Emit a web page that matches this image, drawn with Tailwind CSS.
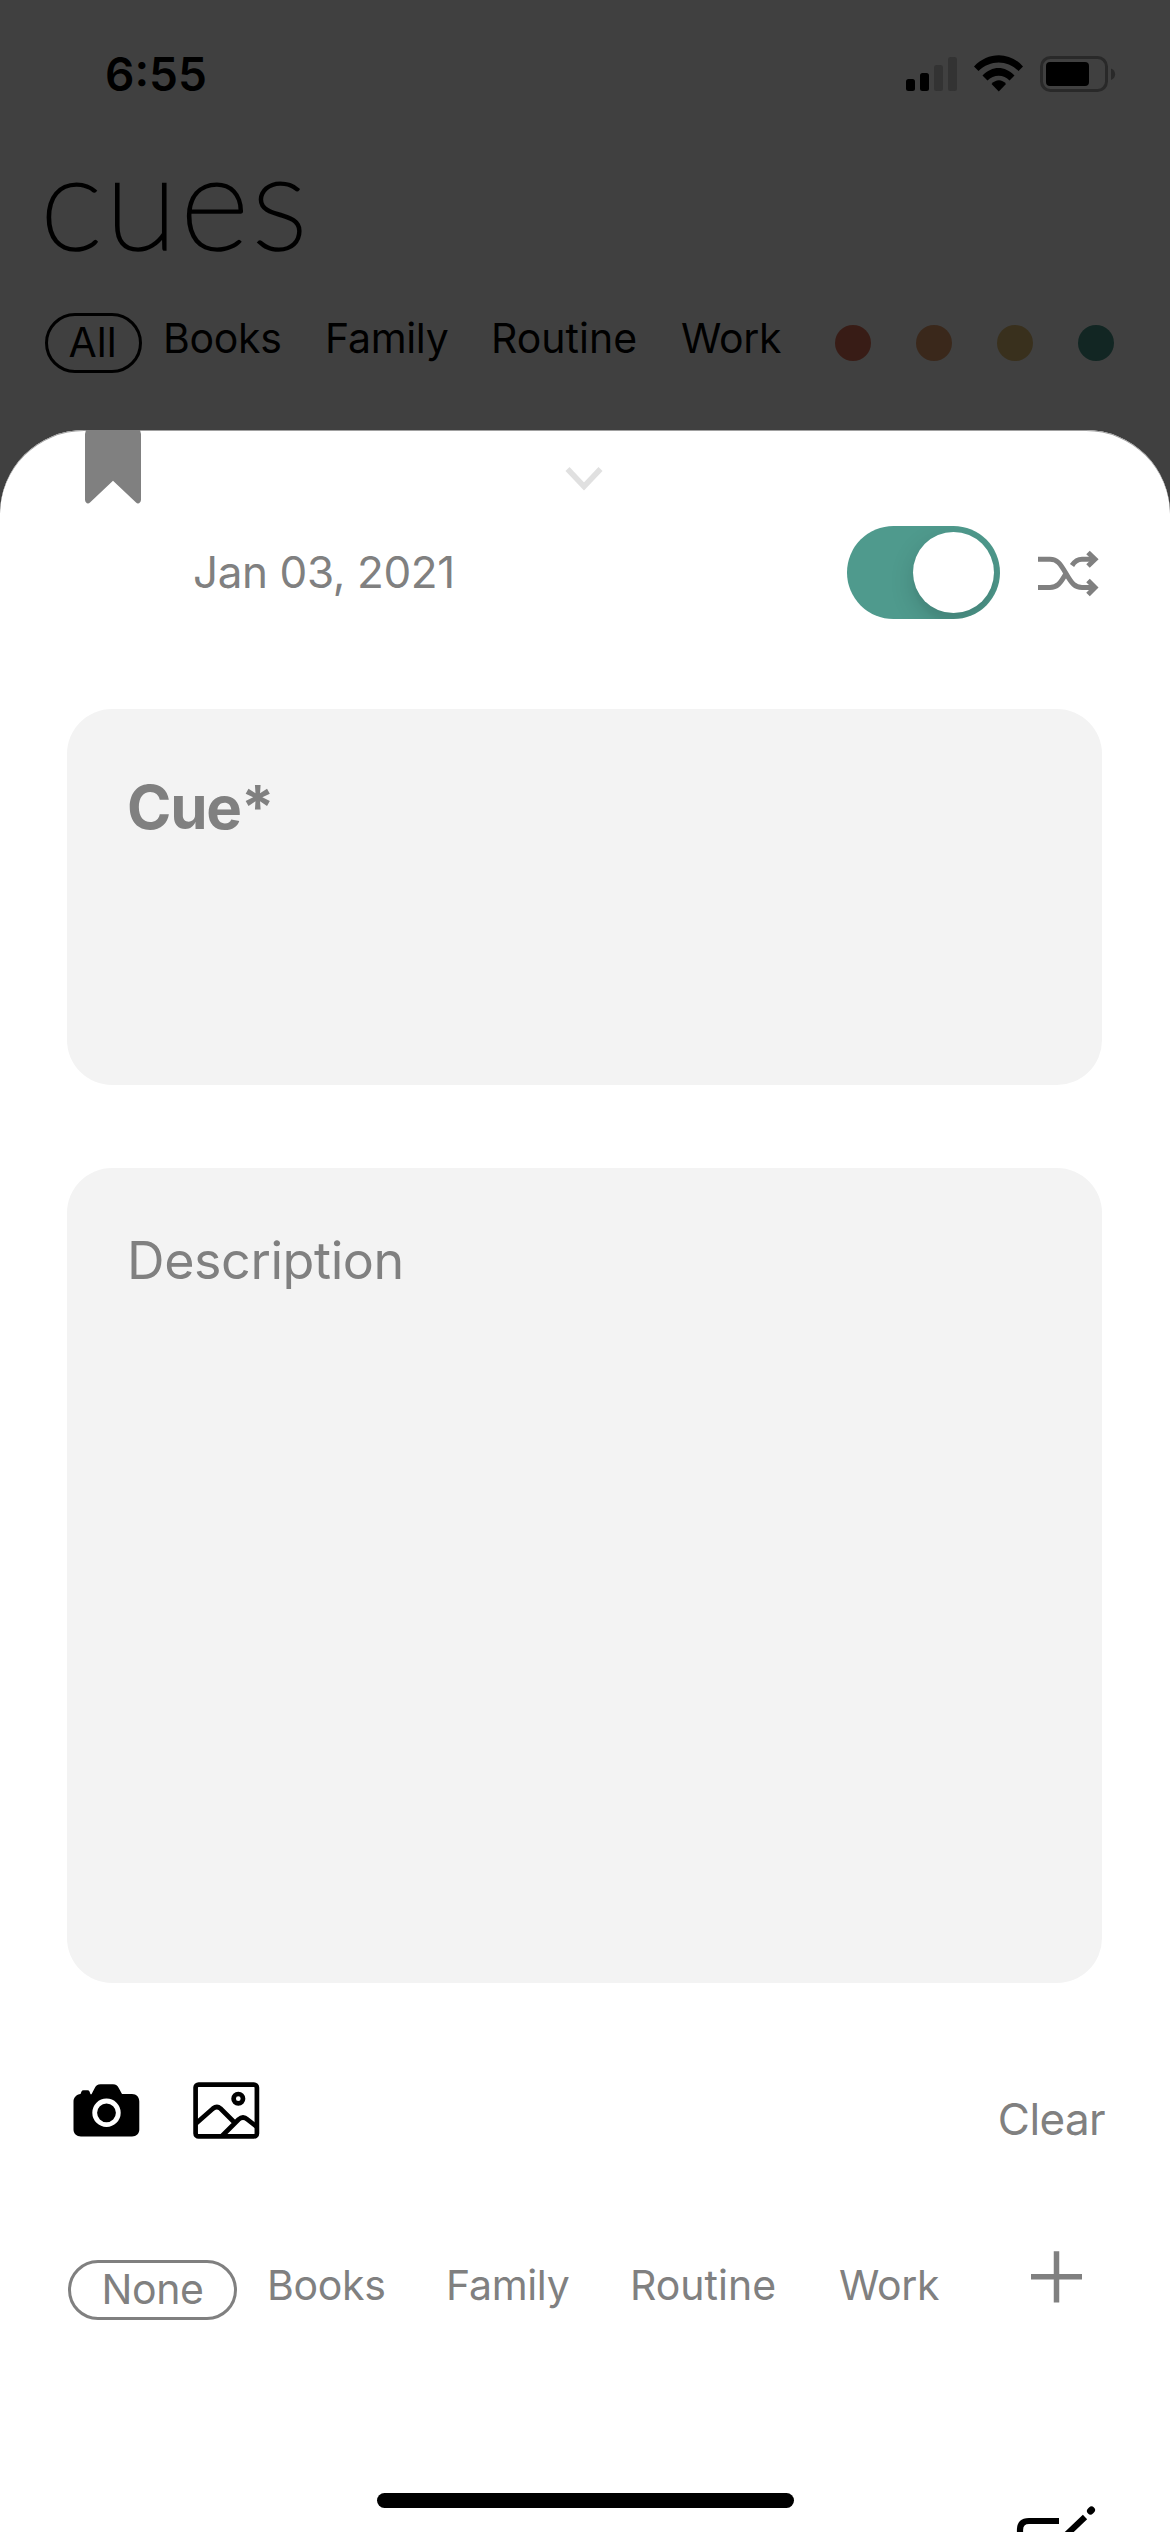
<!DOCTYPE html>
<html lang="en">
<head>
<meta charset="utf-8">
<title>Cues</title>
<script src="https://cdn.jsdelivr.net/npm/@tailwindcss/browser@4"></script>
</head>
<body class="bg-[#404040]">
<div class="relative flex h-[2532px] w-[1170px] flex-col overflow-hidden bg-[#404040] font-['Inter',sans-serif] whitespace-nowrap text-black">
  <!-- Status bar -->
  <header class="flex h-[150px] shrink-0 items-start justify-between pr-[54px] pl-[105px] pt-[44px]">
    <span class="text-[46px] leading-[61px] font-semibold">6:55</span>
    <div class="flex items-start gap-[16px] pt-[9px]">
      <svg class="h-[40px] w-[52px]" viewBox="0 0 52 40">
        <rect x="0" y="26" width="9" height="12" rx="2.5"/>
        <rect x="14" y="20" width="9" height="18" rx="2.5"/>
        <rect x="28" y="12" width="9" height="26" rx="2.5" fill="#333"/>
        <rect x="42" y="4" width="9" height="34" rx="2.5" fill="#333"/>
      </svg>
      <svg class="h-[40px] w-[50px]" viewBox="0 0 50 40">
        <path d="M0 13.500C14-1.500 36-1.500 49 13.500L44.500 18C33.500 6.500 16 6.500 4.500 18Z"/>
        <path d="M8.500 22.500C18 12.500 31 12.500 40.500 22.500L35.500 27.500C30 21 19.500 21 13.500 27.500Z"/>
        <path d="M17.500 31C22 26 28 26 32 31L24.800 38.500Z"/>
      </svg>
      <svg class="h-[40px] w-[76px]" viewBox="0 0 76 40">
        <rect x="1.500" y="4.500" width="65" height="33" rx="9" fill="none" stroke="#292929" stroke-width="3"/>
        <rect x="6" y="9" width="43" height="24" rx="4"/>
        <path d="M71 15.500c5.500 2 5.500 9.500 0 11.500Z" fill="#292929"/>
      </svg>
    </div>
  </header>

  <h1 class="flex h-[150px] shrink-0 items-start pl-[40px] font-['Lato',sans-serif] text-[133px] leading-[150px] font-thin tracking-[3px] [-webkit-text-stroke:3px_black]"><span class="-mt-[27px]">cues</span></h1>

  <!-- Filters -->
  <nav class="flex h-[130px] shrink-0 items-start pt-[13px] pl-[45px] text-[41px] leading-[50px]">
    <span class="flex h-[60px] w-[97px] items-center justify-center rounded-[30px] border-[3px] border-black pr-[2px] pb-[3px] leading-[50px]">All</span>
    <span class="ml-[21px] w-[162px] tracking-[-0.3px]">Books</span>
    <span class="w-[166px] tracking-[-0.3px]">Family</span>
    <span class="w-[190px]">Routine</span>
    <span class="w-[154px] tracking-[-0.3px]">Work</span>
    <div class="flex gap-[45px] pt-[12px]">
      <i class="size-[36px] rounded-full bg-[#381c16]"></i>
      <i class="size-[36px] rounded-full bg-[#3a281b]"></i>
      <i class="size-[36px] rounded-full bg-[#39301d]"></i>
      <i class="size-[36px] rounded-full bg-[#122623]"></i>
    </div>
  </nav>

  <!-- New cue sheet -->
  <main class="flex h-[2102px] shrink-0 flex-col rounded-t-[84px] bg-white text-[#808080] shadow-[inset_0_1px_0_#a0a0a0]">
    <div class="flex h-[96px] shrink-0 items-start pl-[85px]">
      <svg class="h-[74px] w-[56px]" viewBox="0 0 56 74" fill="currentColor"><path d="M1 0H55L56 4V69.500C56 73 53 74.500 51 72.500L28 50.700L5 72.500C3 74.500 0 73 0 69.500V4Z"/></svg>
      <svg class="mt-[34px] ml-[424px] h-[28px] w-[38px]" viewBox="0 0 38 28" fill="none" stroke="#e0e0e0" stroke-width="5.500"><path d="M2.500 5L19 22.500L35.500 5"/></svg>
    </div>

    <div class="flex h-[183px] shrink-0 items-start pl-[193px]">
      <span class="w-[654px] text-[44px] leading-[92px] tracking-[-0.4px]">Jan 03, 2021</span>
      <div class="flex h-[93px] w-[153px] justify-end overflow-hidden rounded-full bg-[#4f9a8d] p-[6px]">
        <i class="size-[81px] rounded-full bg-white shadow-[0_9px_24px_rgba(0,0,0,0.15),0_9px_3px_rgba(0,0,0,0.02)]"></i>
      </div>
      <svg class="mt-[22px] ml-[38px] h-[50px] w-[62px]" viewBox="0 0 62 50" fill="none" stroke="currentColor" stroke-width="5">
        <path d="M0 11.300H12C19 11.300 22 15 28 25.500C34 36 37 39.500 44 39.500H56"/>
        <path d="M0 39.500H12C19 39.500 22 36 28 25.500"/>
        <path d="M34 17.500C37 13 40 11.300 44 11.300H56"/>
        <path d="M50 4.500L57 11.300L50 18M50 32.500L57 39.500L50 46.500"/>
      </svg>
    </div>

    <section class="ml-[67px] h-[376px] w-[1035px] shrink-0 rounded-[45px] bg-[#f3f3f3] pt-[62px] pl-[60px] text-[60px] leading-[72px] font-bold tracking-[-1.2px]">Cue*</section>
    <section class="mt-[83px] ml-[67px] h-[815px] w-[1035px] shrink-0 rounded-[45px] bg-[#f3f3f3] pt-[62px] pl-[60px] text-[52px] leading-[62px] tracking-[-0.4px]">Description</section>

    <div class="mt-[94px] flex h-[183px] shrink-0 items-start pr-[65px] pl-[73px]">
      <svg class="mt-[7px] h-[58px] w-[67px] text-black" viewBox="0 0 67 58" fill="currentColor">
        <path d="M8 52.500C3.500 52.500.5 49.500.5 45.500V17.500C.5 13.500 3.500 10.500 7.500 10L8.500 7.500Q9 6.300 10.500 6.300H14.500Q16 6.300 16.500 7.500L17.500 10.300H18.500L21.500 4.500C23 1.500 24.500.3 27.500.3H40C43 .3 44.500 1.500 46 4.500L49 10H59C63.500 10 66.300 13 66.300 17.500V45.500C66.300 49.500 63.500 52.500 59 52.500Z"/>
        <circle cx="33.500" cy="28.800" r="11.800" fill="none" stroke="white" stroke-width="4.800"/>
      </svg>
      <svg class="mt-[5px] ml-[53px] h-[58px] w-[68px] text-black" viewBox="0 0 68 58" fill="none" stroke="currentColor" stroke-width="4.700">
        <rect x="2.600" y="2.600" width="61.300" height="51.800" rx="3"/>
        <circle cx="45.300" cy="16.700" r="4.700"/>
        <path d="M3 41.500L20 26.500Q24 23.500 27.500 26.500L41 40M29 54L45.500 37.500Q50 33.500 54.500 37.500L64 45"/>
      </svg>
      <span class="ml-auto pt-[17px] text-[44px] leading-[50px] tracking-[-0.6px]">Clear</span>
    </div>

    <div class="flex h-[233px] shrink-0 items-start pl-[68px] text-[41px] leading-[50px]">
      <span class="flex h-[60px] w-[169px] items-center justify-center rounded-[30px] border-[3px] border-[#808080] pb-[3px] leading-[50px] tracking-[-0.4px]">None</span>
      <span class="ml-[30px] w-[179px] tracking-[-0.3px]">Books</span>
      <span class="w-[184px] tracking-[-0.3px]">Family</span>
      <span class="w-[209px]">Routine</span>
      <span class="w-[189px] tracking-[-0.3px]">Work</span>
      <svg class="-mt-[11px] h-[56px] w-[56px]" viewBox="0 0 56 56" stroke="currentColor" stroke-width="5.500"><path d="M3 27.800H54M28.500 2.200V53.500"/></svg>
    </div>

    <!-- Home indicator and compose button -->
    <div class="flex items-start pl-[377px]">
      <div class="h-[15px] w-[417px] rounded-full bg-black"></div>
      <svg class="mt-[12px] ml-[221px] h-[27px] w-[82px] text-black" viewBox="0 0 82 27" fill="none" stroke="currentColor" stroke-width="6.200"><path d="M5 30V25Q5 16 14 16H44M48 33L70 12"/><path d="M75.500 6L76.500 5" stroke-width="7" stroke-linecap="round"/></svg>
    </div>
  </main>
</div>
</body>
</html>
